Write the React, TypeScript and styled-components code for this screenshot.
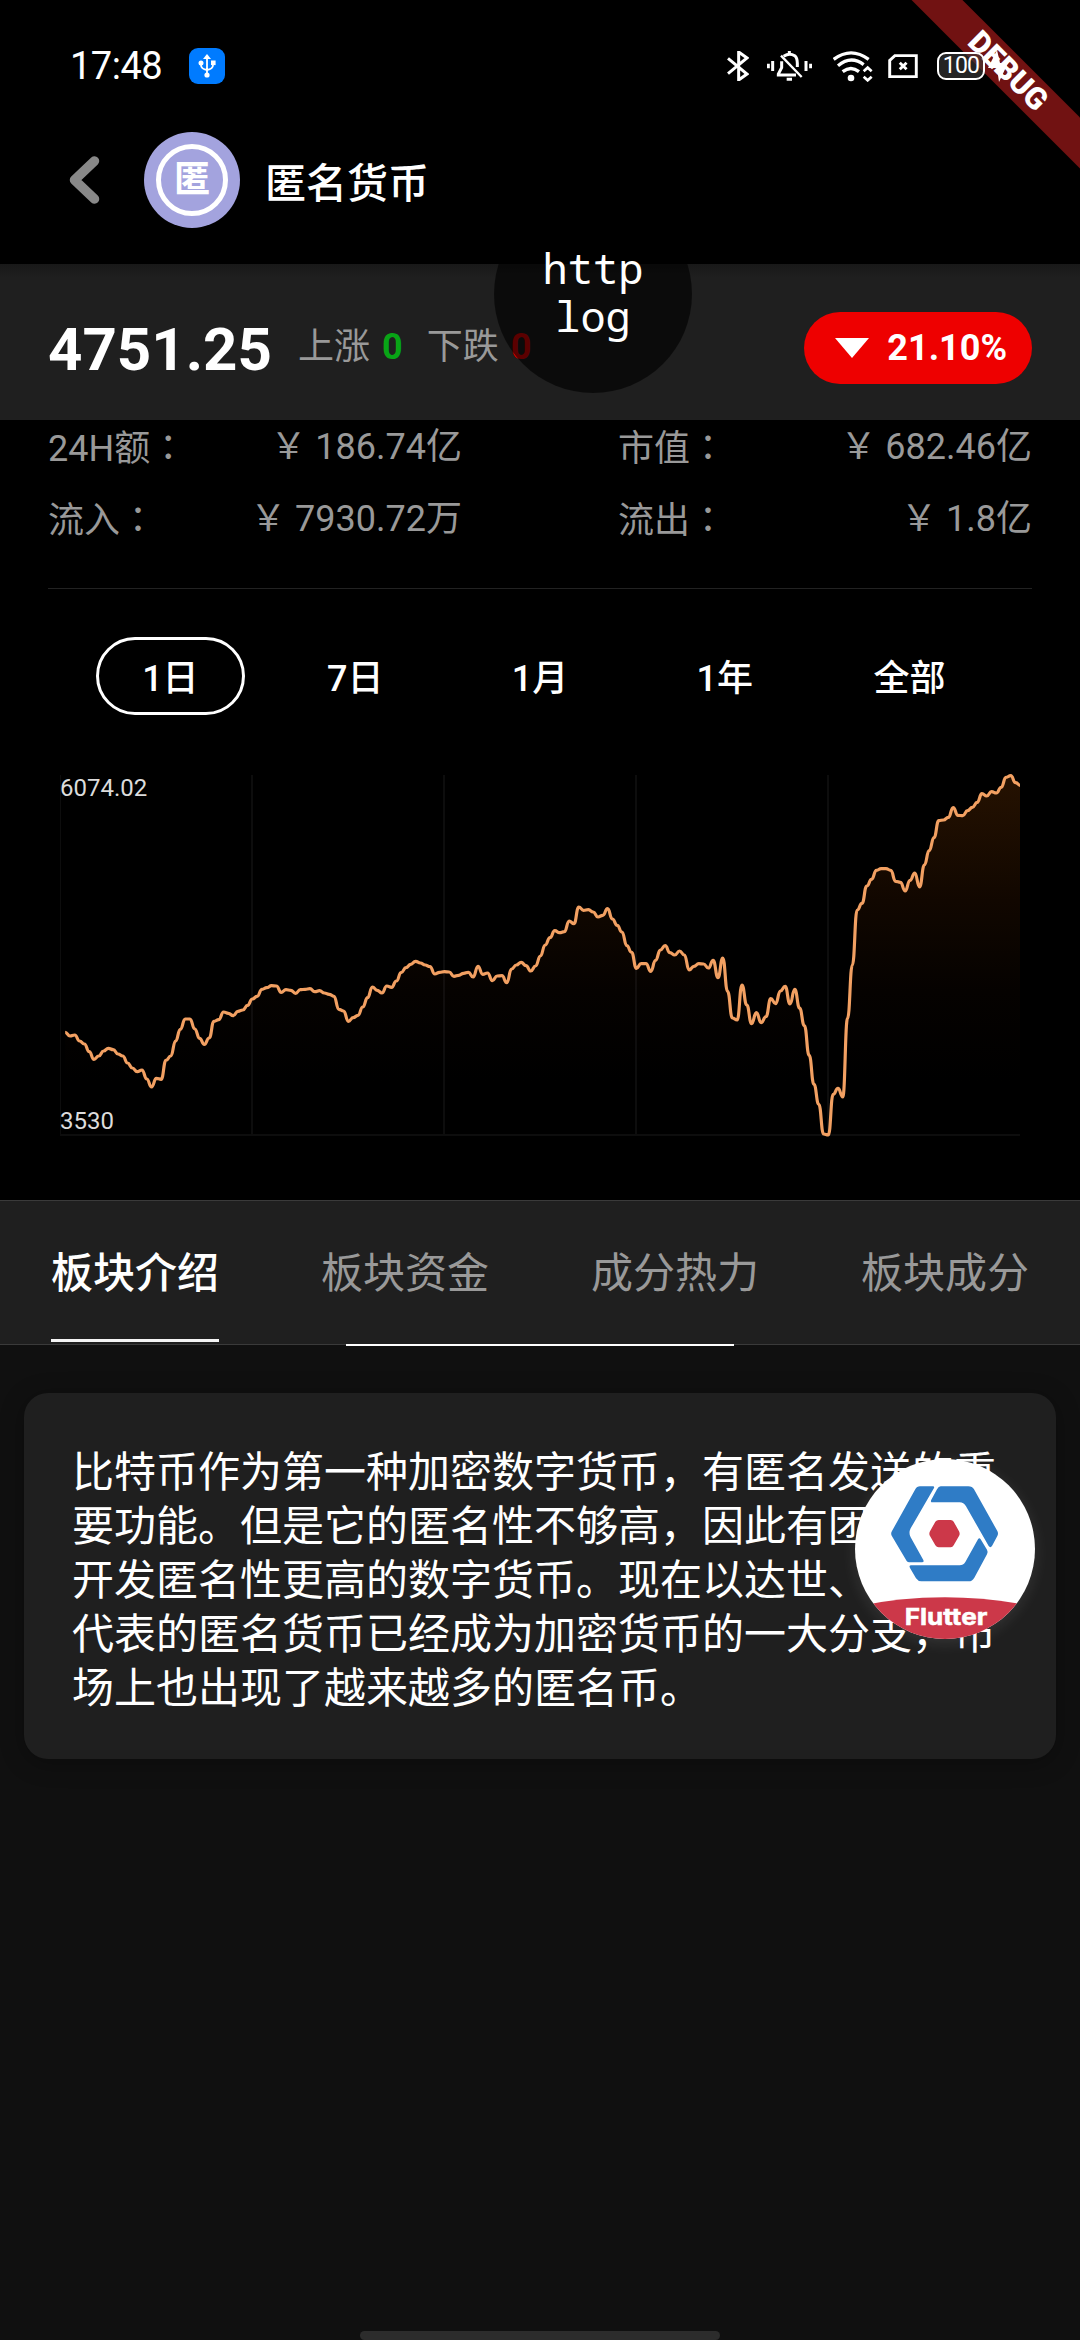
import React from "react";
import styled, { createGlobalStyle } from "styled-components";

const sans = `Roboto, "Noto Sans CJK SC", sans-serif`;

const GlobalStyle = createGlobalStyle`
  * { box-sizing: border-box; }
  html, body { margin: 0; padding: 0; background: #101010; }
  body { font-family: ${sans}; color: #fff; }
`;

const Screen = styled.div`
  position: relative;
  display: flex;
  flex-direction: column;
  width: 1080px;
  height: 2340px;
  overflow: hidden;
  background: #101010;
`;

/* ---------- system status bar ---------- */

const StatusBar = styled.div`
  position: relative;
  z-index: 3;
  display: flex;
  align-items: center;
  justify-content: space-between;
  height: 96px;
  padding: 36px 71px 0 70px;
`;

const StatusLeft = styled.div`
  display: flex;
  align-items: center;
  gap: 27px;
`;

const Clock = styled.span`
  width: 92px;
  font-size: 38px;
  line-height: 44px;
  letter-spacing: -0.5px;
  white-space: nowrap;
`;

const UsbBadge = styled.div`
  display: flex;
  align-items: center;
  justify-content: center;
  width: 36px;
  height: 36px;
  border-radius: 9px;
  background: #007bff;
`;

const StatusRight = styled.div`
  display: flex;
  align-items: center;
`;

const Glyph = styled.svg<{ $gap?: number }>`
  display: block;
  flex: none;
  margin-left: ${(p) => p.$gap ?? 0}px;
`;

const Battery = styled.div`
  display: flex;
  align-items: center;
  justify-content: center;
  width: 48px;
  height: 28px;
  margin-left: 19px;
  border: 2.5px solid #fff;
  border-radius: 9px;
  background: rgba(60, 60, 60, 0.6);
  font-size: 23px;
  line-height: 24px;
  letter-spacing: -0.8px;
`;

const RibbonCorner = styled.div`
  position: absolute;
  z-index: 2;
  top: 0;
  right: 0;
  width: 200px;
  height: 200px;
  overflow: hidden;
`;

const Ribbon = styled.div`
  position: absolute;
  left: -72px;
  top: 53px;
  width: 400px;
  height: 36px;
  transform: rotate(45deg);
  background: #711212;
  font-size: 30.6px;
  font-weight: 900;
  line-height: 36px;
  text-align: center;
`;

/* ---------- app header ---------- */

const Top = styled.header`
  background: #000;
`;

const AppBar = styled.div`
  display: flex;
  align-items: center;
  height: 168px;
  padding-left: 68px;
`;

const Avatar = styled.div`
  display: flex;
  align-items: center;
  justify-content: center;
  width: 96px;
  height: 96px;
  margin-left: 44px;
  border-radius: 50%;
  background: #a3a3de;
`;

const AvatarRing = styled.div`
  display: flex;
  align-items: center;
  justify-content: center;
  width: 72px;
  height: 72px;
  border: 5px solid #fff;
  border-radius: 50%;
  font-size: 36px;
  font-weight: 700;
  line-height: 40px;
`;

const Title = styled.h1`
  margin: 8px 0 0 25px;
  font-size: 41px;
  font-weight: 500;
  line-height: 54px;
`;

/* ---------- quote strip ---------- */

const QuoteBar = styled.section`
  display: flex;
  align-items: center;
  height: 156px;
  padding: 12px 48px 0;
  background: linear-gradient(#181818, #1f1f1f 14px);
`;

const Price = styled.span`
  margin-top: 4px;
  font-size: 60px;
  font-weight: 700;
  line-height: 72px;
`;

const Change = styled.span<{ $gap: number }>`
  margin: -3px 0 0 ${(p) => p.$gap}px;
  color: #999;
  font-size: 36px;
  line-height: 48px;
  white-space: pre;
`;

const Count = styled.b<{ $color: string }>`
  margin-left: 12px;
  color: ${(p) => p.$color};
`;

const DropPill = styled.div`
  display: flex;
  align-items: center;
  justify-content: space-between;
  width: 228px;
  height: 72px;
  margin-left: auto;
  padding: 0 25px 0 31px;
  border-radius: 36px;
  background: #ee0000;
  font-size: 36px;
  font-weight: 700;
`;

const LogBubble = styled.div`
  position: absolute;
  z-index: 4;
  left: 494px;
  top: 195px;
  display: flex;
  align-items: center;
  justify-content: center;
  width: 198px;
  height: 198px;
  padding-bottom: 4px;
  border-radius: 50%;
  background: rgba(0, 0, 0, 0.62);
  font: 42px/48px "Noto Sans Mono", "Liberation Mono", monospace;
  text-align: center;
`;

/* ---------- statistics ---------- */

const Market = styled.section`
  display: flex;
  flex-direction: column;
  height: 780px;
  background: #000;
`;

const StatsGrid = styled.div`
  display: grid;
  grid-template-columns: 414px 414px;
  grid-template-rows: 54px 72px;
  row-gap: 9px;
  column-gap: 156px;
  height: 169px;
  margin: 0 48px;
  border-bottom: 1px solid #222;
`;

const Stat = styled.div`
  display: flex;
  align-items: center;
  justify-content: space-between;
  color: #999;
  font-size: 36px;
  line-height: 48px;
`;

const Colon = styled.span`
  font-family: "Noto Sans CJK TC", sans-serif;
`;

const Periods = styled.nav`
  display: grid;
  grid-template-columns: repeat(5, 1fr);
  justify-items: center;
  margin: 48px 78px 60px;
`;

const Period = styled.button<{ $active: boolean }>`
  width: 149px;
  height: 78px;
  padding: 6px 0 0;
  border: 3px solid ${(p) => (p.$active ? "#fff" : "transparent")};
  border-radius: 39px;
  background: none;
  color: #fff;
  font: 500 36px/48px ${sans};
`;

/* ---------- chart ---------- */

const ChartBox = styled.div`
  position: relative;
  display: flex;
  flex-direction: column;
  justify-content: space-between;
  width: 960px;
  height: 360px;
  margin-left: 60px;
  color: #dcdcdc;
  font-size: 24px;
  line-height: 28px;
`;

const Plot = styled.svg`
  position: absolute;
  left: 0;
  top: -2px;
`;

const AxisLabel = styled.span`
  position: relative;
  margin-top: -1px;
`;

/* ---------- section tabs ---------- */

const TabBar = styled.nav`
  position: relative;
  display: grid;
  grid-template-columns: repeat(4, 270px);
  justify-items: center;
  height: 145px;
  border-top: 1px solid #3a3a3a;
  border-bottom: 1px solid #3a3a3a;
  background: #1f1f1f;
`;

const Tab = styled.button<{ $active: boolean }>`
  height: 141px;
  padding: 8px 0 0;
  border: 0;
  border-bottom: 3px solid ${(p) => (p.$active ? "#f4f4f4" : "transparent")};
  background: none;
  color: ${(p) => (p.$active ? "#fff" : "#999")};
  font: ${(p) => (p.$active ? 500 : 400)} 42px/54px ${sans};
`;

const ScrollMark = styled.i`
  position: absolute;
  left: 346px;
  bottom: -2px;
  width: 388px;
  height: 2px;
  background: #fff;
`;

/* ---------- introduction ---------- */

const Card = styled.article`
  margin: 48px 24px 0;
  padding: 53px 48px 43px;
  border-radius: 24px;
  background: #1f1f1f;
  box-shadow: 0 4px 24px rgba(0, 0, 0, 0.3);
  font-size: 42px;
  line-height: 54px;
`;

const Fab = styled.div`
  position: absolute;
  left: 855px;
  top: 1459px;
  width: 180px;
  height: 180px;
  border-radius: 50%;
  background: #fff;
  box-shadow: 0 4px 16px rgba(255, 255, 255, 0.1);
  overflow: hidden;
`;

const HomeIndicator = styled.div`
  width: 360px;
  height: 9px;
  margin: auto auto 0;
  border-radius: 5px;
  background: #2c2c2c;
`;

/* ---------- data ---------- */

const levels = [
  817, 828, 825, 843, 852, 875, 898, 888, 873, 865, 869, 882, 888, 909, 924, 935, 930, 957, 981, 955,
  958, 901, 888, 843, 808, 777, 777, 807, 835, 853, 834, 784, 779, 756, 760, 767, 754, 750, 736, 717,
  709, 688, 683, 677, 678, 697, 689, 691, 700, 689, 688, 686, 695, 692, 699, 703, 709, 748, 753, 784,
  773, 766, 741, 713, 681, 691, 699, 678, 682, 663, 638, 623, 613, 604, 609, 615, 620, 642, 637, 635,
  636, 649, 646, 640, 637, 651, 619, 643, 639, 662, 648, 647, 668, 627, 615, 607, 617, 633, 618, 588,
  555, 533, 512, 518, 515, 483, 491, 441, 451, 449, 456, 471, 466, 446, 477, 496, 516, 557, 577, 625,
  611, 611, 634, 601, 570, 557, 578, 585, 573, 585, 630, 619, 611, 612, 624, 601, 653, 594, 694, 774,
  780, 675, 735, 791, 758, 788, 770, 716, 731, 693, 679, 732, 688, 744, 797, 886, 973, 1033, 1122, 1125,
  1003, 985, 1011, 775, 615, 450, 430, 378, 358, 331, 326, 326, 331, 364, 367, 393, 361, 339, 381, 315,
  272, 233, 182, 180, 172, 143, 166, 167, 152, 142, 127, 101, 108, 95, 99, 82, 52, 47, 68, 76,
];

const START = 75.5;
const STEP = 14.4;

const line = levels.reduce((d, y, i) => {
  const x = START + i * STEP;
  if (i === 0) return `M${x} ${y}`;
  const mid = (x - STEP / 2).toFixed(1);
  return `${d}C${mid} ${levels[i - 1]} ${mid} ${y} ${x.toFixed(1)} ${y}`;
}, "");

const stats = [
  ["24H额", "￥ 186.74亿"],
  ["市值", "￥ 682.46亿"],
  ["流入", "￥ 7930.72万"],
  ["流出", "￥ 1.8亿"],
];

const periods = ["1日", "7日", "1月", "1年", "全部"];
const tabs = ["板块介绍", "板块资金", "成分热力", "板块成分"];

const Chart = () => (
  <ChartBox>
    <Plot width="960" height="364" viewBox="60 39 2880 1092">
      <defs>
        <linearGradient id="area" gradientUnits="userSpaceOnUse" x1="0" y1="45" x2="0" y2="1125">
          <stop offset="0" stopColor="#261201" />
          <stop offset="0.35" stopColor="#110700" />
          <stop offset="0.6" stopColor="#050200" />
          <stop offset="0.85" stopColor="#000" />
        </linearGradient>
      </defs>
      <path d={`${line}V1125H${START}Z`} fill="url(#area)" />
      <g stroke="#fff" strokeOpacity="0.05" strokeWidth="6">
        <path d="M60 45V1125M636 45V1125M1212 45V1125M1788 45V1125M2364 45V1125M60 1125H2940" />
      </g>
      <path d={line} fill="none" stroke="#f2a062" strokeWidth="9.5" strokeLinejoin="round" />
    </Plot>
    <AxisLabel>6074.02</AxisLabel>
    <AxisLabel>3530</AxisLabel>
  </ChartBox>
);

const StatusIcons = () => (
  <StatusRight>
    <Glyph width="22" height="30" viewBox="138 153 66 90" fill="none" stroke="#fff" strokeWidth="9">
      <path d="M141 175L198 222L173 240V156L198 174L141 221" />
    </Glyph>
    <Glyph $gap={18} width="45" height="30" viewBox="258 153 135 90" fill="none" stroke="#fff" strokeWidth="9">
      <path d="M262 191V205M275 183V213M375 183V213M389 191V205" />
      <path d="M300 167L362 231" strokeWidth="7" />
      <path d="M308 169Q325 157 341 167Q349 174 349 190V201" />
      <path d="M302 184V203L292 222V225H345" />
      <path d="M325 153V163M317 238H333" />
    </Glyph>
    <Glyph $gap={21} width="40" height="31" viewBox="456 152 120 93" fill="none" stroke="#fff" strokeWidth="10">
      <path d="M458 177Q510 138 563 177M471 196Q510 164 548 193M485 214Q510 195 534 214" />
      <circle cx="510" cy="233" r="10" fill="#fff" stroke="none" />
      <path d="M548 213L560 202L572 213M548 229L560 240L572 229" strokeWidth="8" />
    </Glyph>
    <Glyph $gap={15} width="30" height="24" viewBox="621 161 90 74" fill="none" stroke="#fff" strokeWidth="9">
      <path d="M641 166H707V231H625V181Z" />
      <path d="M656 188L677 208M677 188L656 208" />
    </Glyph>
    <Battery>100</Battery>
    <Glyph $gap={2} width="22" height="32" viewBox="0 0 22 32" fill="#fff">
      <path d="M10 0L1 18H10L12 32L21 13H13Z" />
    </Glyph>
  </StatusRight>
);

const App = () => (
  <Screen>
    <GlobalStyle />
    <Top>
      <StatusBar>
        <StatusLeft>
          <Clock>17:48</Clock>
          <UsbBadge>
            <Glyph width="18" height="24" viewBox="0 0 18 24" fill="none" stroke="#fff" strokeWidth="1.8">
              <path d="M9 4V20M3 9V11Q3 15 9 16Q15 15 15 11V9" />
              <path d="M9 0L13 5H5Z" fill="#fff" stroke="none" />
              <circle cx="3" cy="9" r="2.5" fill="#fff" stroke="none" />
              <rect x="13" y="6.5" width="4.6" height="4.6" fill="#fff" stroke="none" />
              <circle cx="9" cy="21" r="2.6" fill="#fff" stroke="none" />
            </Glyph>
          </UsbBadge>
        </StatusLeft>
        <StatusIcons />
      </StatusBar>
      <AppBar>
        <Glyph width="32" height="50" viewBox="0 0 32 50" fill="none" stroke="#888" strokeWidth="9.5">
          <path d="M26.500 6L6.500 25L26.500 44" strokeLinecap="round" strokeLinejoin="round" />
        </Glyph>
        <Avatar>
          <AvatarRing>匿</AvatarRing>
        </Avatar>
        <Title>匿名货币</Title>
      </AppBar>
    </Top>

    <QuoteBar>
      <Price>4751.25</Price>
      <Change $gap={26}>
        上涨<Count $color="#08a416">0</Count>
      </Change>
      <Change $gap={24}>
        下跌<Count $color="#ee0000">0</Count>
      </Change>
      <DropPill>
        <Glyph width="34" height="20" viewBox="0 0 34 20" fill="#fff">
          <path d="M0 0H34L17 20Z" />
        </Glyph>
        21.10%
      </DropPill>
    </QuoteBar>

    <Market>
      <StatsGrid>
        {stats.map(([label, value]) => (
          <Stat key={label}>
            <span>
              {label}
              <Colon>：</Colon>
            </span>
            <span>{value}</span>
          </Stat>
        ))}
      </StatsGrid>
      <Periods>
        {periods.map((p, i) => (
          <Period key={p} $active={i === 0}>
            {p}
          </Period>
        ))}
      </Periods>
      <Chart />
    </Market>

    <TabBar>
      {tabs.map((t, i) => (
        <Tab key={t} $active={i === 0}>
          {t}
        </Tab>
      ))}
      <ScrollMark />
    </TabBar>

    <Card>
      比特币作为第一种加密数字货币，有匿名发送的重要功能。但是它的匿名性不够高，因此有团队专门开发匿名性更高的数字货币。现在以达世、门罗为代表的匿名货币已经成为加密货币的一大分支，市场上也出现了越来越多的匿名币。
    </Card>

    <HomeIndicator />

    <RibbonCorner>
      <Ribbon>DEBUG</Ribbon>
    </RibbonCorner>

    <LogBubble>
      http
      <br />
      log
    </LogBubble>

    <Fab>
      <svg width="180" height="180" viewBox="405 239 540 540">
        <g fill="#2f7cc6">
          <path d="M600 321H639Q644 321 642 326L572 447Q565 461 572 474L610 542Q613 549 606 549H568Q563 549 560 545L516 471Q511 463 516 455L585 331Q591 321 600 321Z" />
          <path d="M662 321H745Q757 321 762 330L832 455Q836 462 832 470L816 500Q811 507 806 500L738 381Q731 369 719 369H638Q630 369 634 361L651 330Q656 321 662 321Z" />
          <path d="M774 480Q778 474 782 480L801 511Q805 518 801 525L763 595Q757 606 746 606H604Q594 606 588 597L570 566Q566 558 573 558H719Q730 558 736 548Z" />
        </g>
        <path
          d="M656 422H692Q698 422 701 427L717 456Q721 463 717 470L701 498Q698 504 692 504H656Q650 504 646 498L630 470Q626 463 630 456L646 427Q650 422 656 422Z"
          fill="#cc3849"
        />
        <path d="M405 682Q675 626 945 682V779H405Z" fill="#cc3849" />
        <text
          x="678"
          y="738"
          fill="#fff"
          stroke="#fff"
          strokeWidth="1.500"
          fontFamily="Inter, sans-serif"
          fontWeight="700"
          fontSize="70"
          textAnchor="middle"
          textLength="248"
          lengthAdjust="spacingAndGlyphs"
        >
          Flutter
        </text>
      </svg>
    </Fab>
  </Screen>
);

export default App;
